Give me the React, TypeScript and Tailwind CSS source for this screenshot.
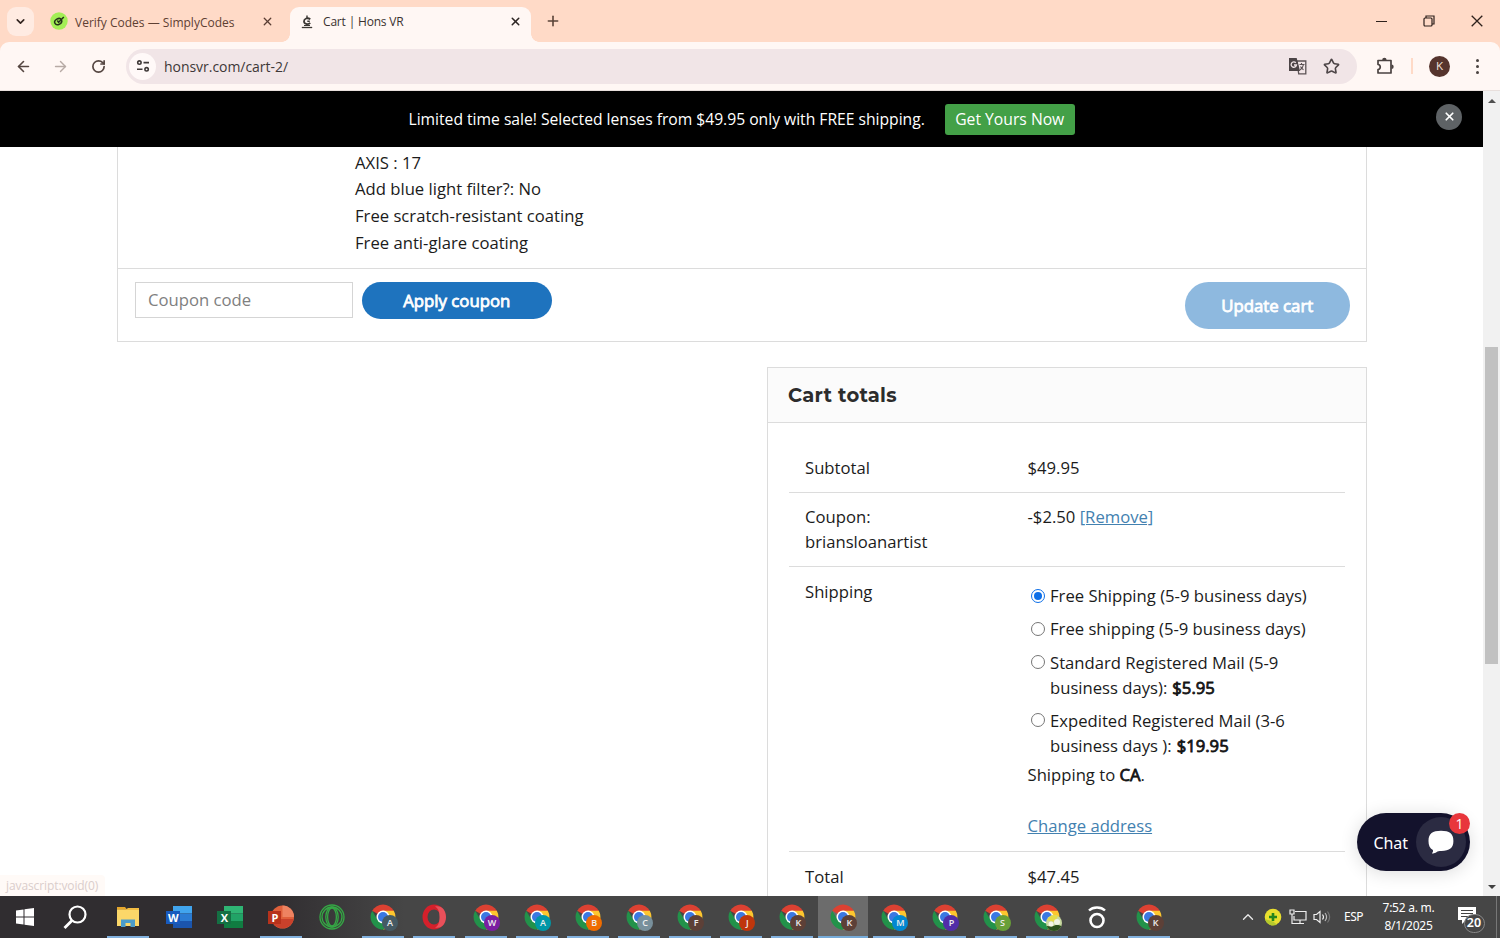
import React from 'react';
import { ArrowLeft, ArrowRight, ChevronDown, ChevronUp, Plus, RotateCw, Star, X } from 'lucide-react';

interface ShippingOption {
  id: string;
  lines: string[];
  price?: string;
  checked?: boolean;
}

const shippingOptions: ShippingOption[] = [
  { id: 'free-1', lines: ['Free Shipping (5-9 business days)'], checked: true },
  { id: 'free-2', lines: ['Free shipping (5-9 business days)'] },
  { id: 'standard', lines: ['Standard Registered Mail (5-9', 'business days):'], price: '$5.95' },
  { id: 'expedited', lines: ['Expedited Registered Mail (3-6', 'business days ):'], price: '$19.95' },
];

const SimplyCodesIcon = () => (
  <svg viewBox="0 0 18 18" className="h-[18px] w-[18px] shrink-0">
    <circle cx="9" cy="9" r="8.7" fill="#a4ee55" />
    <ellipse cx="8.2" cy="9.6" rx="3.7" ry="2.8" transform="rotate(-30 8.2 9.6)" fill="none" stroke="#26331a" strokeWidth="1.5" />
    <path d="M7.3 8.5l1.3 1.8L13.8 5" fill="none" stroke="#26331a" strokeWidth="1.5" />
  </svg>
);

const HonsIcon = () => (
  <svg viewBox="0 0 12 14" className="h-[14px] w-[12px] shrink-0" fill="none" stroke="#3b3733">
    <path d="M9.3 4.2C6.5 2.2 3 3.600 3 6.300c0 2.800 3.500 3.700 6.300 1.700" strokeWidth="1.8" />
    <path d="M6 .5v2.700M6.300 6.200h2.500" strokeWidth="1.4" />
    <path d="M.8 12.500h10.400" strokeWidth="1.3" />
    <path d="M3 10.500h6" strokeWidth="1" />
  </svg>
);

const SiteSettingsIcon = () => (
  <svg viewBox="0 0 14 14" className="h-[14px] w-[14px]" fill="none" stroke="#403a39" strokeWidth="1.6">
    <circle cx="3.4" cy="3.6" r="1.7" />
    <path d="M7.500 3.600H13M1 10.300h5.500" />
    <circle cx="10.6" cy="10.3" r="1.7" />
  </svg>
);

const TranslateIcon = () => (
  <svg viewBox="0 0 18 18" className="h-[18px] w-[18px]">
    <path d="M8 4h8.800v12.800H9.700z" fill="none" stroke="#5c5355" strokeWidth="1.3" />
    <path d="M0 1h7.700l3.300 13H0z" fill="#4c4446" />
    <path d="M6.800 5.700A2.700 2.700 0 1 0 7.500 8H5" fill="none" stroke="#f1e5e7" strokeWidth="1.3" />
    <path d="M10.500 7.500h5M12.500 6v1.500M14.500 7.500c-.4 2.500-1.500 4-3.500 5.500M11.500 9.500c.8 1.500 1.700 2.400 3 3.200" fill="none" stroke="#5c5355" strokeWidth="1.1" />
  </svg>
);

const ExtensionIcon = () => (
  <svg viewBox="0 0 18 18" className="h-[18px] w-[18px]">
    <path d="M2 3.500h13V16H2v-3.500c3-.3 3-4.700 0-5z" fill="none" stroke="#4a4240" strokeWidth="1.7" strokeLinejoin="round" />
    <path d="M6.200 3a2.200 2.200 0 0 1 4.400 0zM15.500 7.500a2.200 2.200 0 0 1 0 4.400z" fill="#4a4240" />
  </svg>
);

const BrowserTabs = () => (
  <div className="flex h-[42px] items-stretch bg-[#ffdac7] text-[12px] text-[#5e4033]">
    <div className="ml-[7px] mt-[7px] flex h-[29px] w-[27px] items-center justify-center rounded-[9px] bg-[#ffebe2]">
      <ChevronDown size={13} strokeWidth={3} color="#332520" />
    </div>
    <div className="ml-[16px] flex w-[239px] items-center">
      <SimplyCodesIcon />
      <span className="ml-[7px] mt-[3px] w-[185.5px] whitespace-nowrap">Verify Codes — SimplyCodes</span>
      <X size={13} strokeWidth={2.4} color="#593d33" />
    </div>
    <div className="relative ml-[1px] mt-[7px] flex w-[241px] items-center rounded-t-[9px] bg-[#fff7f4] pb-[6px] pl-[11px] text-[#3a3230]">
      <span className="absolute -left-[8px] bottom-0 h-[8px] w-[8px] bg-[radial-gradient(circle_at_0_0,#ffdac7_7.5px,#fff7f4_8px)]" />
      <span className="absolute -right-[8px] bottom-0 h-[8px] w-[8px] bg-[radial-gradient(circle_at_100%_0,#ffdac7_7.5px,#fff7f4_8px)]" />
      <HonsIcon />
      <span className="ml-[10px] mt-[1px] w-[186px] whitespace-nowrap tracking-[-0.18px]">Cart | Hons VR</span>
      <X size={13} strokeWidth={2.8} color="#2d2624" />
    </div>
    <div className="ml-[13.5px] flex items-center">
      <Plus size={16} strokeWidth={2.4} color="#5a4338" />
    </div>
    <div className="ml-auto mr-[17.5px] flex items-center gap-[36px]">
      <span className="h-[1px] w-[11px] bg-[#2e211c]" />
      <svg viewBox="0 0 12 12" className="h-[12px] w-[12px]" fill="none" stroke="#2e211c" strokeWidth="1.2">
        <rect x="1" y="3" width="8" height="8" rx="1" />
        <path d="M3 3V1h8v8H9" />
      </svg>
      <svg viewBox="0 0 12 12" className="h-[12px] w-[12px]" stroke="#2e211c" strokeWidth="1.3">
        <path d="M.7.7l10.600 10.600M11.300.7L.7 11.300" />
      </svg>
    </div>
  </div>
);

const AddressBar = () => (
  <div className="bg-[#ffdac7]">
    <div className="flex h-[49px] items-center rounded-t-[9px] border-b border-[#e8dfdc] bg-[#fff7f4]">
      <ArrowLeft className="ml-[15px]" size={17} strokeWidth={2.3} color="#554641" />
      <ArrowRight className="ml-[20px]" size={17} strokeWidth={2} color="#b7aaa5" />
      <RotateCw className="ml-[22px]" size={15} strokeWidth={2.7} color="#554641" />
      <div className="ml-[20px] flex h-[35px] w-[1231px] items-center rounded-full bg-[#f1e5e7] pl-[3px] pr-[17px]">
        <span className="flex h-[27px] w-[27px] items-center justify-center rounded-full bg-[#fff9f8]">
          <SiteSettingsIcon />
        </span>
        <span className="ml-[8px] text-[14px] tracking-[-0.04px] text-[#3e3837]">honsvr.com/cart-2/</span>
        <span className="ml-auto mr-[16px]"><TranslateIcon /></span>
        <Star size={17} strokeWidth={2.3} color="#4c4446" />
      </div>
      <span className="ml-[19px]"><ExtensionIcon /></span>
      <span className="ml-[17px] h-[16px] w-[2px] bg-[#ffdac7]" />
      <span className="ml-[16px] flex h-[21px] w-[21px] items-center justify-center rounded-full bg-[#56342d] text-[11.5px] text-[#f4e3de]">K</span>
      <span className="ml-[26px] flex flex-col gap-[3px]">
        <i className="h-[3px] w-[3px] rounded-full bg-[#4a4240]" />
        <i className="h-[3px] w-[3px] rounded-full bg-[#4a4240]" />
        <i className="h-[3px] w-[3px] rounded-full bg-[#4a4240]" />
      </span>
    </div>
  </div>
);

const SaleBanner = () => (
  <div className="flex h-[56px] shrink-0 items-center bg-black pl-[408.5px] text-[15.7px] text-white">
    <span className="mt-[2px] w-[536.5px] whitespace-nowrap tracking-[-0.02px]">Limited time sale! Selected lenses from $49.95 only with FREE shipping.</span>
    <button className="h-[31px] w-[129.5px] whitespace-nowrap rounded-[3px] bg-[#43a047] pt-[2px]">Get Yours Now</button>
    <button className="mb-[5px] ml-auto mr-[21px] flex h-[26px] w-[26px] items-center justify-center rounded-full bg-[#5e6265]">
      <X size={13} strokeWidth={3.2} />
    </button>
  </div>
);

const CartTable = () => (
  <div className="ml-[117px] h-[195px] w-[1250px] shrink-0 border border-t-0 border-[#dcdcdc]">
    <div className="h-[122px] border-b border-[#dcdcdc] pl-[237px] pt-[2.6px] leading-[26.8px]">
      <p>AXIS : 17</p>
      <p>Add blue light filter?: No</p>
      <p>Free scratch-resistant coating</p>
      <p>Free anti-glare coating</p>
    </div>
    <div className="flex items-start pl-[17px] pr-[16.5px] pt-[13px]">
      <div className="flex h-[36px] w-[218px] items-center border border-[#d5d5d5] pl-[12px] pt-[1px] text-[#808080]">Coupon code</div>
      <button className="ml-[9px] h-[37px] w-[189.5px] rounded-full bg-[#1e73be] text-[16.8px] text-white [-webkit-text-stroke:0.8px_#fff]">Apply coupon</button>
      <button className="ml-auto h-[47px] w-[164.5px] rounded-full bg-[#8eb9df] text-[16.8px] text-white [-webkit-text-stroke:0.8px_#fff]">Update cart</button>
    </div>
  </div>
);

const CartTotals = () => (
  <div className="ml-[767px] mt-[25px] w-[600px] shrink-0 border border-[#dcdcdc]">
    <h2 className="h-[55px] border-b border-[#dcdcdc] bg-[#fbfbfb] pl-[20px] font-[Montserrat,Inter,sans-serif] text-[19.5px] font-bold leading-[54px] tracking-[0.25px] text-[#2c2c2c]">Cart totals</h2>
    <div className="mx-[21px] mt-[20px] leading-[25px]">
      <div className="flex h-[50px] border-b border-[#dcdcdc] pt-[12px]">
        <span className="w-[238.5px] pl-[16px]">Subtotal</span>
        <span>$49.95</span>
      </div>
      <div className="flex h-[74px] border-b border-[#dcdcdc] pt-[11px]">
        <span className="w-[238.5px] pl-[16px]">Coupon:<br />briansloanartist</span>
        <span>-$2.50 <a className="text-[#4381b0] underline">[Remove]</a></span>
      </div>
      <div className="flex h-[285px] border-b border-[#dcdcdc] pt-[12px]">
        <span className="w-[238.5px] pl-[16px]">Shipping</span>
        <div className="pt-[4px]">
          <ul>
            {shippingOptions.map((option) => (
              <li key={option.id} className="mb-[8.3px] flex items-start">
                <span
                  className={
                    option.checked
                      ? 'ml-[3.5px] mr-[5px] mt-[5.5px] flex h-[14px] w-[14px] items-center justify-center rounded-full border-[1.5px] border-[#0d6fe8] bg-white'
                      : 'ml-[3.5px] mr-[5px] mt-[5.5px] h-[14px] w-[14px] rounded-full border border-[#767676] bg-white'
                  }
                >
                  {option.checked && <i className="h-[8px] w-[8px] rounded-full bg-[#0d6fe8]" />}
                </span>
                <div>
                  {option.lines.map((line, index) => (
                    <div key={line} className="flex gap-[5px] whitespace-nowrap">
                      <span>{line}</span>
                      {option.price && index === option.lines.length - 1 && (
                        <b className="font-normal [-webkit-text-stroke:0.8px_#111]">{option.price}</b>
                      )}
                    </div>
                  ))}
                </div>
              </li>
            ))}
          </ul>
          <p className="-mt-[4px]">Shipping to <b className="font-normal [-webkit-text-stroke:0.8px_#111]">CA</b>.</p>
          <p className="mt-[26px]"><a className="text-[#4381b0] underline">Change address</a></p>
        </div>
      </div>
      <div className="flex h-[50px] pt-[11.5px]">
        <span className="w-[238.5px] pl-[16px]">Total</span>
        <span>$47.45</span>
      </div>
    </div>
  </div>
);

const ChatWidget = () => (
  <div className="absolute left-[1357px] top-[722px] flex h-[58px] w-[113px] items-center rounded-full bg-[#13122c] text-white shadow-[0_2px_18px_rgba(0,0,0,0.14)]">
    <span className="ml-[16.5px] mt-[1px] w-[42.5px] font-['Noto_Sans',sans-serif] text-[16px] tracking-[-0.1px]">Chat</span>
    <span className="flex h-[50px] w-[50px] items-center justify-center rounded-full bg-[#2b2b42]">
      <svg viewBox="0 0 26 24" className="h-[24px] w-[26px]" fill="#fff">
        <path d="M13 .8C21.500.8 25.400 3.500 25.400 11c0 7-3.800 9.600-12 10-2.500.1-3.500 0-5 1.200-1.300 1-3.200 1.500-4.500 1 1-.9 1.300-2 1-3.300C1.700 18.300.5 15.500.5 11 .5 3.500 4.500.8 13 .8z" />
      </svg>
    </span>
    <span className="absolute right-0 top-0 flex h-[21px] w-[21px] items-center justify-center rounded-full bg-[#e8363c] text-[14px]">1</span>
  </div>
);

const Scrollbar = () => (
  <div className="flex w-[17px] shrink-0 flex-col items-center bg-[#f1f1f1]">
    <span className="mt-[8px] h-0 w-0 border-x-[4px] border-b-[4px] border-x-transparent border-b-[#505050]" />
    <span className="mt-[244px] h-[317px] w-[13px] bg-[#c1c1c1]" />
    <span className="mb-[7px] mt-auto h-0 w-0 border-x-[4px] border-t-[4px] border-x-transparent border-t-[#404040]" />
  </div>
);

const ChromeIcon = () => (
  <svg viewBox="0 0 26 26" className="h-[26px] w-[26px]">
    <path d="M13 13L2.200 6.800A12.500 12.500 0 0 1 23.800 6.800z" fill="#dc4132" />
    <path d="M13 13V6.800h10.800A12.500 12.500 0 0 1 13 25.500z" fill="#fdc62f" />
    <path d="M2.200 6.800L7.700 16 13 19l-1.500 6.400A12.500 12.500 0 0 1 2.200 6.800z" fill="#22924a" />
    <path d="M13 18h6l-5.500 7.500h-3z" fill="#22924a" />
    <circle cx="13" cy="13" r="6.5" fill="#fff" />
    <circle cx="13" cy="13" r="5" fill="#3b78e2" />
  </svg>
);

const ChromeProfile = ({ letter, color }: { letter?: string; color: string }) => (
  <span className="relative">
    <ChromeIcon />
    <span className={`absolute left-[11.5px] top-[11px] flex h-[16px] w-[16px] items-center justify-center rounded-full text-[9px] font-semibold leading-none text-[#eee] ${color}`}>
      {letter}
    </span>
  </span>
);

const GardenBadge = () => (
  <svg viewBox="0 0 16 16" className="absolute left-[11.5px] top-[11px] h-[16px] w-[16px]">
    <circle cx="8" cy="8" r="8" fill="#c9d9a0" />
    <path d="M1 5a8 8 0 0 1 11-4L9 7z" fill="#e6dc4a" />
    <path d="M.6 11A8 8 0 0 0 15.400 11L11 9.500 6 11.500z" fill="#2c521d" />
    <circle cx="11" cy="7" r="3" fill="#eef3e2" />
    <circle cx="5" cy="9" r="2.5" fill="#f4f6e8" />
  </svg>
);

const ExplorerIcon = () => (
  <svg viewBox="0 0 24 20" className="h-[20px] w-[24px]">
    <path d="M1 0h8l2 2.500H1z" fill="#e5a62b" />
    <path d="M1 2.500h22V19H1z" fill="#fbd769" />
    <path d="M1 2.500h9l2-1.500h11v2H1z" fill="#f2bd43" />
    <path d="M5 20v-7.500h14V20h-4.500v-4h-5v4z" fill="#4b9cc9" />
  </svg>
);

interface OfficeIconProps {
  letter: string;
  shades: [string, string, string];
  tile: string;
}

const OfficeIcon = ({ letter, shades, tile }: OfficeIconProps) => (
  <span className="relative flex h-[22px] w-[26px] justify-end">
    <svg viewBox="0 0 20 22" className="h-[22px] w-[20px]">
      <path d="M1 0h19v7.500H1z" fill={shades[0]} />
      <path d="M1 7.500h19V15H1z" fill={shades[1]} />
      <path d="M1 15h19v7H1z" fill={shades[2]} />
    </svg>
    <span className={`absolute left-0 top-[5px] flex h-[13px] w-[14px] items-center justify-center text-[11px] font-bold leading-none text-white ${tile}`}>{letter}</span>
  </span>
);

const PowerPointIcon = () => (
  <span className="relative flex h-[24px] w-[26px] justify-end">
    <svg viewBox="0 0 24 24" className="h-[24px] w-[24px]">
      <circle cx="12.5" cy="12" r="11.5" fill="#e0603b" />
      <path d="M12.500.5A11.500 11.500 0 0 1 24 12H12.500z" fill="#ee8361" />
      <path d="M1.200 14h22.600A11.500 11.500 0 0 1 1.200 14z" fill="#c9412b" />
    </svg>
    <span className="absolute left-0 top-[6px] flex h-[13px] w-[13px] items-center justify-center bg-[#b7321c] text-[11px] font-bold leading-none text-white">P</span>
  </span>
);

interface TaskItem {
  icon: React.ReactNode;
  open?: boolean;
  active?: boolean;
}

const taskItems: TaskItem[] = [
  {
    icon: (
      <svg viewBox="0 0 18 18" className="mr-[2px] h-[18px] w-[18px]" fill="#fff">
        <path d="M0 2.500L7.500 1.500v7H0zM8.500 1.300L18 0v8.500H8.500zM0 9.500h7.500v7L0 15.500zM8.500 9.500H18V18l-9.500-1.300z" />
      </svg>
    ),
  },
  {
    icon: (
      <svg viewBox="0 0 24 24" className="mr-[4px] h-[24px] w-[24px]" fill="none" stroke="#fff" strokeWidth="2.2">
        <circle cx="14.5" cy="9.5" r="8" />
        <path d="M9 15.500L1.500 23" strokeWidth="2.8" />
      </svg>
    ),
  },
  { icon: <ExplorerIcon />, open: true },
  { icon: <OfficeIcon letter="W" shades={['#41a5ee', '#2b7cd3', '#1b55ad']} tile="bg-[#185abd]" /> },
  { icon: <OfficeIcon letter="X" shades={['#2fb574', '#21a366', '#107c41']} tile="bg-[#147043]" /> },
  { icon: <PowerPointIcon />, open: true },
  {
    icon: (
      <svg viewBox="0 0 26 26" className="h-[26px] w-[26px]" fill="none" stroke="#35a845" strokeWidth="1.3">
        <circle cx="13" cy="13" r="12" />
        <circle cx="13" cy="13" r="10" />
        <ellipse cx="13" cy="13" rx="6.2" ry="10" />
        <ellipse cx="13" cy="13" rx="4.4" ry="9" />
      </svg>
    ),
  },
  { icon: <ChromeProfile letter="A" color="bg-[#455a64]" />, open: true },
  {
    icon: (
      <svg viewBox="0 0 26 26" className="h-[26px] w-[26px]">
        <ellipse cx="13" cy="13" rx="9" ry="10" fill="none" stroke="#d5202b" strokeWidth="5" />
        <path d="M14 2.500c6.500-1.500 11 3.500 11 10.500s-4.500 12-11 10.500c3-1 4.500-5 4.500-10.500S17 4 14 2.500z" fill="#e9505a" />
      </svg>
    ),
    open: true,
  },
  { icon: <ChromeProfile letter="W" color="bg-[#7b1fa2]" />, open: true },
  { icon: <ChromeProfile letter="A" color="bg-[#0097a7]" />, open: true },
  { icon: <ChromeProfile letter="B" color="bg-[#ef6c00]" />, open: true },
  { icon: <ChromeProfile letter="C" color="bg-[#78909c]" />, open: true },
  { icon: <ChromeProfile letter="F" color="bg-[#5d4037]" />, open: true },
  { icon: <ChromeProfile letter="J" color="bg-[#bf360c]" />, open: true },
  { icon: <ChromeProfile letter="K" color="bg-[#5d4037]" />, open: true },
  { icon: <ChromeProfile letter="K" color="bg-[#5d4037]" />, open: true, active: true },
  { icon: <ChromeProfile letter="M" color="bg-[#0288d1]" />, open: true },
  { icon: <ChromeProfile letter="P" color="bg-[#512da8]" />, open: true },
  { icon: <ChromeProfile letter="S" color="bg-[#689f38]" />, open: true },
  { icon: <span className="relative"><ChromeIcon /><GardenBadge /></span>, open: true },
  {
    icon: (
      <svg viewBox="0 0 20 24" className="mr-[2px] h-[24px] w-[20px]" fill="none" stroke="#fff" strokeWidth="2.6">
        <circle cx="10" cy="15.5" r="6.5" />
        <path d="M2 5.500C6 1.500 14 1.500 18 5.500" strokeWidth="2.4" />
      </svg>
    ),
    open: true,
  },
  { icon: <ChromeProfile letter="K" color="bg-[#5d4037]" />, open: true },
];

const Tray = () => (
  <div className="ml-auto flex items-center font-['Noto_Sans','Open_Sans',sans-serif] text-[12px] text-white">
    <ChevronUp size={18} strokeWidth={1.8} color="#e8e8e8" />
    <svg viewBox="0 0 18 18" className="ml-[7px] h-[18px] w-[18px]">
      <circle cx="9" cy="9" r="8.3" fill="#e9df2e" />
      <path d="M1 11a8.300 8.300 0 0 0 12 5.500l-4-3z" fill="#b6ca2c" />
      <path d="M9 5v8M5 9h8" stroke="#25851d" strokeWidth="2.6" />
    </svg>
    <svg viewBox="0 0 18 16" className="ml-[7px] h-[16px] w-[18px]" fill="none" stroke="#eee" strokeWidth="1.2">
      <path d="M6 2.500h11v8.500H5V7M1 1h4v4H1zM3 5v9.500h4M7 14.500h8M11 11v3.500" />
    </svg>
    <svg viewBox="0 0 18 16" className="ml-[6px] h-[16px] w-[18px]" fill="none" stroke="#eee" strokeWidth="1.2">
      <path d="M1 5.500h2.500L7 2.500v11l-3.500-3H1zM9.500 5.500c1.200 1.500 1.200 3.500 0 5" />
      <path d="M12 4c2 2.500 2 5.500 0 8" stroke="#bbb" />
      <path d="M14.500 2.500c2.700 3.500 2.700 7.500 0 11" stroke="#777" />
    </svg>
    <span className="ml-[13px] w-[20px] tracking-[-0.5px]">ESP</span>
    <span className="ml-[13.5px] w-[62px] whitespace-nowrap text-center leading-[18px] tracking-[-0.25px]">7:52 a. m.<br />8/1/2025</span>
    <span className="relative ml-[18px] mr-[10.5px] h-[30px] w-[28px]">
      <svg viewBox="0 0 18 17" className="mt-[5px] h-[17px] w-[18px]">
        <path d="M0 0h18v13H8l-4 4v-4H0z" fill="#fff" />
        <path d="M3 3.500h12M3 6.500h12M3 9.500h7" stroke="#444" strokeWidth="1.2" />
      </svg>
      <b className="absolute left-[6px] top-[12px] flex h-[19px] w-[21px] items-center justify-center rounded-full border border-[#888] bg-[#464646] text-[12.5px] font-semibold">20</b>
    </span>
    <span className="mr-[3px] h-[42px] w-px bg-[#777]" />
  </div>
);

const Taskbar = () => (
  <div className="flex h-[42px] bg-[linear-gradient(90deg,#302d30_0,#302d30_18%,#464646_27%,#464646_100%)] pl-[0.6px]">
    {taskItems.map((item, index) => (
      <div key={index} className="flex h-[42px] w-[51.05px] shrink-0 flex-col items-center">
        <div className={item.active ? 'flex h-[40px] w-[50px] items-center justify-center bg-[#6c6c6c] pt-[1px]' : 'flex h-[40px] w-[50px] items-center justify-center pt-[1px]'}>
          {item.icon}
        </div>
        {item.open && <span className={item.active ? 'h-[2px] w-[50px] bg-[#76abd9]' : 'h-[2px] w-[42px] bg-[#82b1de]'} />}
      </div>
    ))}
    <Tray />
  </div>
);

export default function App() {
  return (
    <div className="flex h-[938px] w-[1500px] flex-col overflow-hidden bg-white font-['Open_Sans',sans-serif]">
      <BrowserTabs />
      <AddressBar />
      <div className="relative flex h-[805px] overflow-hidden">
        <main className="flex flex-1 flex-col overflow-hidden text-[16.66px] text-[#1b1b1b]">
          <SaleBanner />
          <CartTable />
          <CartTotals />
        </main>
        <Scrollbar />
        <ChatWidget />
        {/* link target shown by the browser while hovering */}
        <div className="absolute bottom-0 left-0 h-[21px] w-[105px] whitespace-nowrap rounded-tr-[4px] bg-[#fffaf7] pl-[6px] text-[12px] leading-[21px] tracking-[-0.1px] text-[#dacdcb]">javascript:void(0)</div>
      </div>
      <Taskbar />
    </div>
  );
}
